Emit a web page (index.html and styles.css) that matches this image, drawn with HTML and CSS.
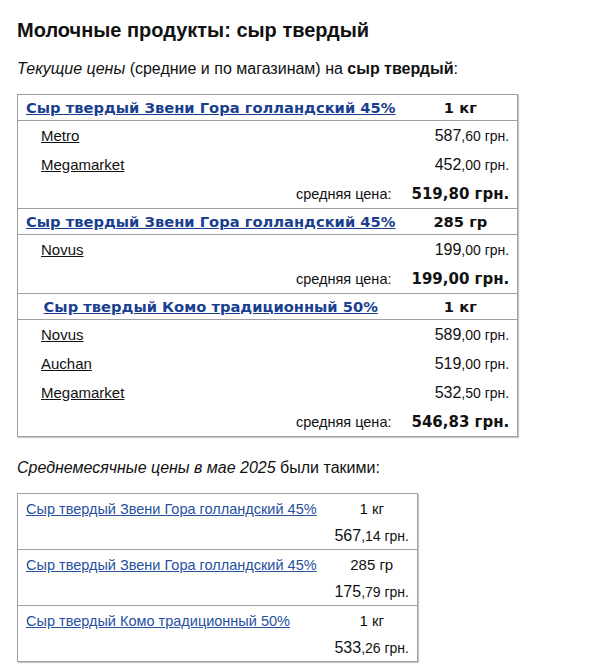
FILE: index.html
```html
<!DOCTYPE html>
<html lang="ru">
<head>
<meta charset="utf-8">
<title>Молочные продукты: сыр твердый</title>
<link rel="stylesheet" href="styles.css">
</head>
<body>
<div class="page">
  <h1 class="title">Молочные продукты: сыр твердый</h1>
  <p class="intro"><i>Текущие цены</i> (средние и по магазинам) на <b>сыр твердый</b>:</p>
  <table class="prices">
    <colgroup><col class="c-name"><col class="c-val"></colgroup>
    <tbody class="group">
      <tr class="head"><td class="hname"><a href="#">Сыр твердый Звени Гора голландский 45%</a></td><td class="hunit">1 кг</td></tr>
      <tr class="store"><td class="sname"><a href="#">Metro</a></td><td class="sprice">587<small>,60 грн.</small></td></tr>
      <tr class="store"><td class="sname"><a href="#">Megamarket</a></td><td class="sprice">452<small>,00 грн.</small></td></tr>
      <tr class="avg"><td class="alabel">средняя цена:</td><td class="aprice">519,80 грн.</td></tr>
    </tbody>
    <tbody class="group">
      <tr class="head"><td class="hname"><a href="#">Сыр твердый Звени Гора голландский 45%</a></td><td class="hunit">285 гр</td></tr>
      <tr class="store"><td class="sname"><a href="#">Novus</a></td><td class="sprice">199<small>,00 грн.</small></td></tr>
      <tr class="avg"><td class="alabel">средняя цена:</td><td class="aprice">199,00 грн.</td></tr>
    </tbody>
    <tbody class="group">
      <tr class="head"><td class="hname"><a href="#">Сыр твердый Комо традиционный 50%</a></td><td class="hunit">1 кг</td></tr>
      <tr class="store"><td class="sname"><a href="#">Novus</a></td><td class="sprice">589<small>,00 грн.</small></td></tr>
      <tr class="store"><td class="sname"><a href="#">Auchan</a></td><td class="sprice">519<small>,00 грн.</small></td></tr>
      <tr class="store"><td class="sname"><a href="#">Megamarket</a></td><td class="sprice">532<small>,50 грн.</small></td></tr>
      <tr class="avg"><td class="alabel">средняя цена:</td><td class="aprice">546,83 грн.</td></tr>
    </tbody>
  </table>
  <p class="intro second"><i>Среднемесячные цены в мае 2025</i> были такими:</p>
  <table class="monthly">
    <colgroup><col class="m-name"><col class="m-val"></colgroup>
    <tbody class="mgroup">
      <tr><td class="mname"><a href="#">Сыр твердый Звени Гора голландский 45%</a></td><td class="munit">1 кг</td></tr>
      <tr><td></td><td class="mprice">567<small>,14 грн.</small></td></tr>
    </tbody>
    <tbody class="mgroup">
      <tr><td class="mname"><a href="#">Сыр твердый Звени Гора голландский 45%</a></td><td class="munit">285 гр</td></tr>
      <tr><td></td><td class="mprice">175<small>,79 грн.</small></td></tr>
    </tbody>
    <tbody class="mgroup">
      <tr><td class="mname"><a href="#">Сыр твердый Комо традиционный 50%</a></td><td class="munit">1 кг</td></tr>
      <tr><td></td><td class="mprice">533<small>,26 грн.</small></td></tr>
    </tbody>
  </table>
</div>
</body>
</html>
```

FILE: styles.css
```css
html, body {
  margin: 0;
  padding: 0;
  background: #fff;
}

.page {
  padding: 18px 17px;
  font-family: "Liberation Sans", Arial, sans-serif;
  color: #111;
}

.title {
  margin: 0;
  font-size: 20px;
  line-height: 24px;
  font-weight: bold;
  color: #111;
}

.intro {
  margin: 17px 0 15px;
  font-size: 16px;
  line-height: 20px;
}

.intro.second {
  margin-top: 21px;
}

.prices {
  border-collapse: collapse;
  width: 500px;
  border: 1px solid #a0a0a0;
  box-shadow: 1px 1px 1px #c8c8c8;
}

.c-name { width: 388px; }
.c-val { width: 112px; }

.prices td {
  padding: 0 8px;
}

.group + .group .head td {
  border-top: 1px solid #a0a0a0;
}

.head td {
  height: 25px;
  line-height: 18px;
  border-bottom: 1px solid #a0a0a0;
  font-family: "DejaVu Sans", Verdana, sans-serif;
  font-weight: bold;
  font-size: 14.7px;
  white-space: nowrap;
}

.hname {
  text-align: center;
}

.hname a {
  color: #1a3f8f;
}

.hunit {
  text-align: center;
  color: #111;
}

.store td, .avg td {
  height: 29px;
  line-height: 18px;
}

.sname {
  padding-left: 23px !important;
  font-size: 15px;
}

.sname a {
  color: #111;
}

.sprice {
  text-align: right;
  white-space: nowrap;
  font-size: 16px;
}

.sprice small, .mprice small {
  font-size: 14px;
}

.alabel {
  text-align: right;
  font-size: 14.5px;
  padding-right: 12px !important;
}

.aprice {
  text-align: right;
  white-space: nowrap;
  font-family: "DejaVu Sans", Verdana, sans-serif;
  font-weight: bold;
  font-size: 15px;
}

.monthly {
  border-collapse: collapse;
  width: 401px;
  border: 1px solid #a0a0a0;
  box-shadow: 1px 1px 1px #c8c8c8;
  font-size: 14.5px;
}

.m-name { width: 311px; }
.m-val { width: 90px; }

.monthly td {
  height: 27px;
  line-height: 18px;
  padding: 0 8px;
  white-space: nowrap;
}

.mgroup tr:first-child td {
  padding-top: 1px;
}

.mgroup + .mgroup tr:first-child td {
  border-top: 1px solid #a0a0a0;
}

.mname a {
  color: #2650a0;
}

.munit {
  text-align: center;
  font-size: 15px;
}

.mprice {
  text-align: right;
  font-size: 16px;
}
```
